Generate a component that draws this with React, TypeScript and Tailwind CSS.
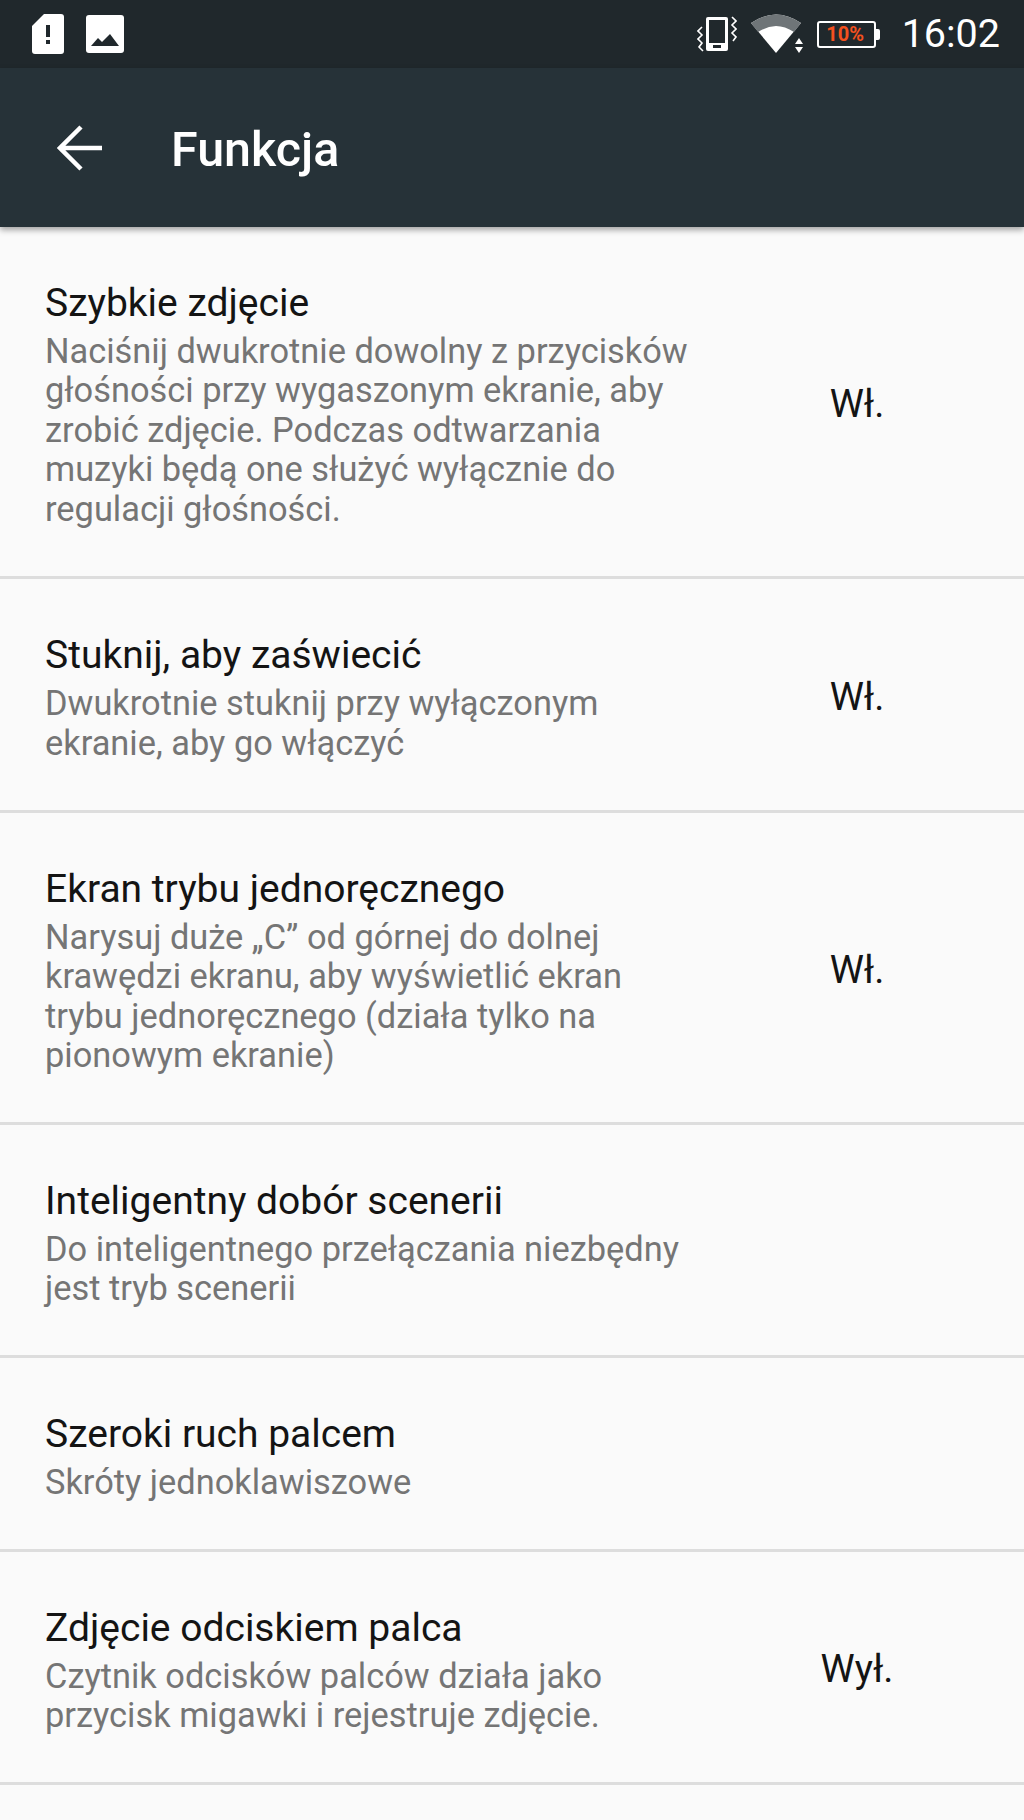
import React from "react";

const rows = [
  { t: "Szybkie zdjęcie", s: ["Naciśnij dwukrotnie dowolny z przycisków", "głośności przy wygaszonym ekranie, aby", "zrobić zdjęcie. Podczas odtwarzania", "muzyki będą one służyć wyłącznie do", "regulacji głośności."], v: "Wł.", h: "h-[352px]" },
  { t: "Stuknij, aby zaświecić", s: ["Dwukrotnie stuknij przy wyłączonym", "ekranie, aby go włączyć"], v: "Wł.", h: "h-[234px]" },
  { t: "Ekran trybu jednoręcznego", s: ["Narysuj duże „C” od górnej do dolnej", "krawędzi ekranu, aby wyświetlić ekran", "trybu jednoręcznego (działa tylko na", "pionowym ekranie)"], v: "Wł.", h: "h-[312px]" },
  { t: "Inteligentny dobór scenerii", s: ["Do inteligentnego przełączania niezbędny", "jest tryb scenerii"], v: "", h: "h-[233px]" },
  { t: "Szeroki ruch palcem", s: ["Skróty jednoklawiszowe"], v: "", h: "h-[194px]" },
  { t: "Zdjęcie odciskiem palca", s: ["Czytnik odcisków palców działa jako", "przycisk migawki i rejestruje zdjęcie."], v: "Wył.", h: "h-[233px]" },
];

function StatusBar() {
  return (
    <div className="h-[68px] bg-[#20282c] flex items-center justify-between pl-[32px] pr-[24px]">
      <div className="flex items-center gap-[22px]">
        <svg width="32" height="40" viewBox="0 0 32 40"><path d="M12 0H29a3 3 0 0 1 3 3V37a3 3 0 0 1-3 3H3a3 3 0 0 1-3-3V12Z" fill="#fff" /><rect x="14" y="11" width="4" height="12" fill="#20282c" /><rect x="14" y="26" width="4" height="4" fill="#20282c" /></svg>
        <svg width="38" height="38" viewBox="0 0 38 38"><rect width="38" height="38" rx="3" fill="#fff" /><path d="M5 31 L12 23 L16 27 L24 19 L33 31Z" fill="#20282c" /></svg>
      </div>
      <div className="flex items-center">
        <svg width="40" height="36" viewBox="0 0 40 36" className="mr-[14px]">
          <rect x="9" y="1" width="22" height="34" rx="2" fill="#fff" />
          <rect x="12" y="4" width="16" height="23" fill="#20282c" />
          <rect x="16" y="29" width="8" height="3" fill="#20282c" />
          <path d="M5 11 L1 15 L5 19 L1 23 L5 27 L2 31 L6 35 M35 1 L39 5 L35 9 L39 13 L35 17 L39 21 L36 25" fill="none" stroke="#fff" strokeWidth="1.6" />
        </svg>
        <svg width="54" height="42" viewBox="0 0 54 42" className="mr-[12px]">
          <path d="M0 10 Q25 -7 50 10 L25 40Z" fill="#fff" />
          <path d="M0 10 Q25 -7 50 10 L43 19 Q25 7 7 19Z" fill="#6f7578" />
          <path d="M48 25 L52 31 H44Z M44 34 H52 L48 40Z" fill="#fff" />
        </svg>
        <div className="relative w-[63px] h-[27px] mr-[22px]">
          <div className="w-[59px] h-[27px] border-2 border-white rounded-[3px] flex items-center justify-center text-[#f4511e] text-[20px] leading-[23px] font-bold font-['Roboto',sans-serif] pr-[2px]">10%</div>
          <div className="absolute right-0 top-[8px] w-[4px] h-[11px] bg-white rounded-r-[2px]" />
        </div>
        <span className="text-white text-[39.5px] leading-[44px] font-['Roboto',sans-serif]">16:02</span>
      </div>
    </div>
  );
}

function Toolbar() {
  return (
    <div className="relative z-10 h-[159px] bg-[#263238] flex items-center pl-[57px] shadow-[0_3px_6px_rgba(0,0,0,0.35)]">
      <svg width="46" height="46" viewBox="0 0 46 46" className="mr-[68px]">
        <path d="M45 23H3M24 2 L3 23 L24 44" fill="none" stroke="#fff" strokeWidth="4.5" />
      </svg>
      <span className="text-white text-[48.4px] leading-[54px] font-medium font-['Roboto',sans-serif] pt-[4px]">Funkcja</span>
    </div>
  );
}

export default function App() {
  return (
    <div className="w-[1024px] h-[1820px] overflow-hidden bg-[#fafafa] font-['Roboto',sans-serif]">
      <StatusBar />
      <Toolbar />
      {rows.map((r) => (
        <div key={r.t} className={`${r.h} border-b-[3px] border-[#dddddd] flex items-center pl-[45px]`}>
          <div className="w-[742px] pt-[4px]">
            <div className="text-[#141414] text-[39px] leading-[50px] mb-[4px]">{r.t}</div>
            {r.s.map((l) => (
              <div key={l} className="text-[#757575] text-[34.4px] leading-[39.5px] whitespace-nowrap">{l}</div>
            ))}
          </div>
          <div className="w-[140px] text-center text-[#141414] text-[38.5px] pt-[4px]">{r.v}</div>
        </div>
      ))}
    </div>
  );
}
